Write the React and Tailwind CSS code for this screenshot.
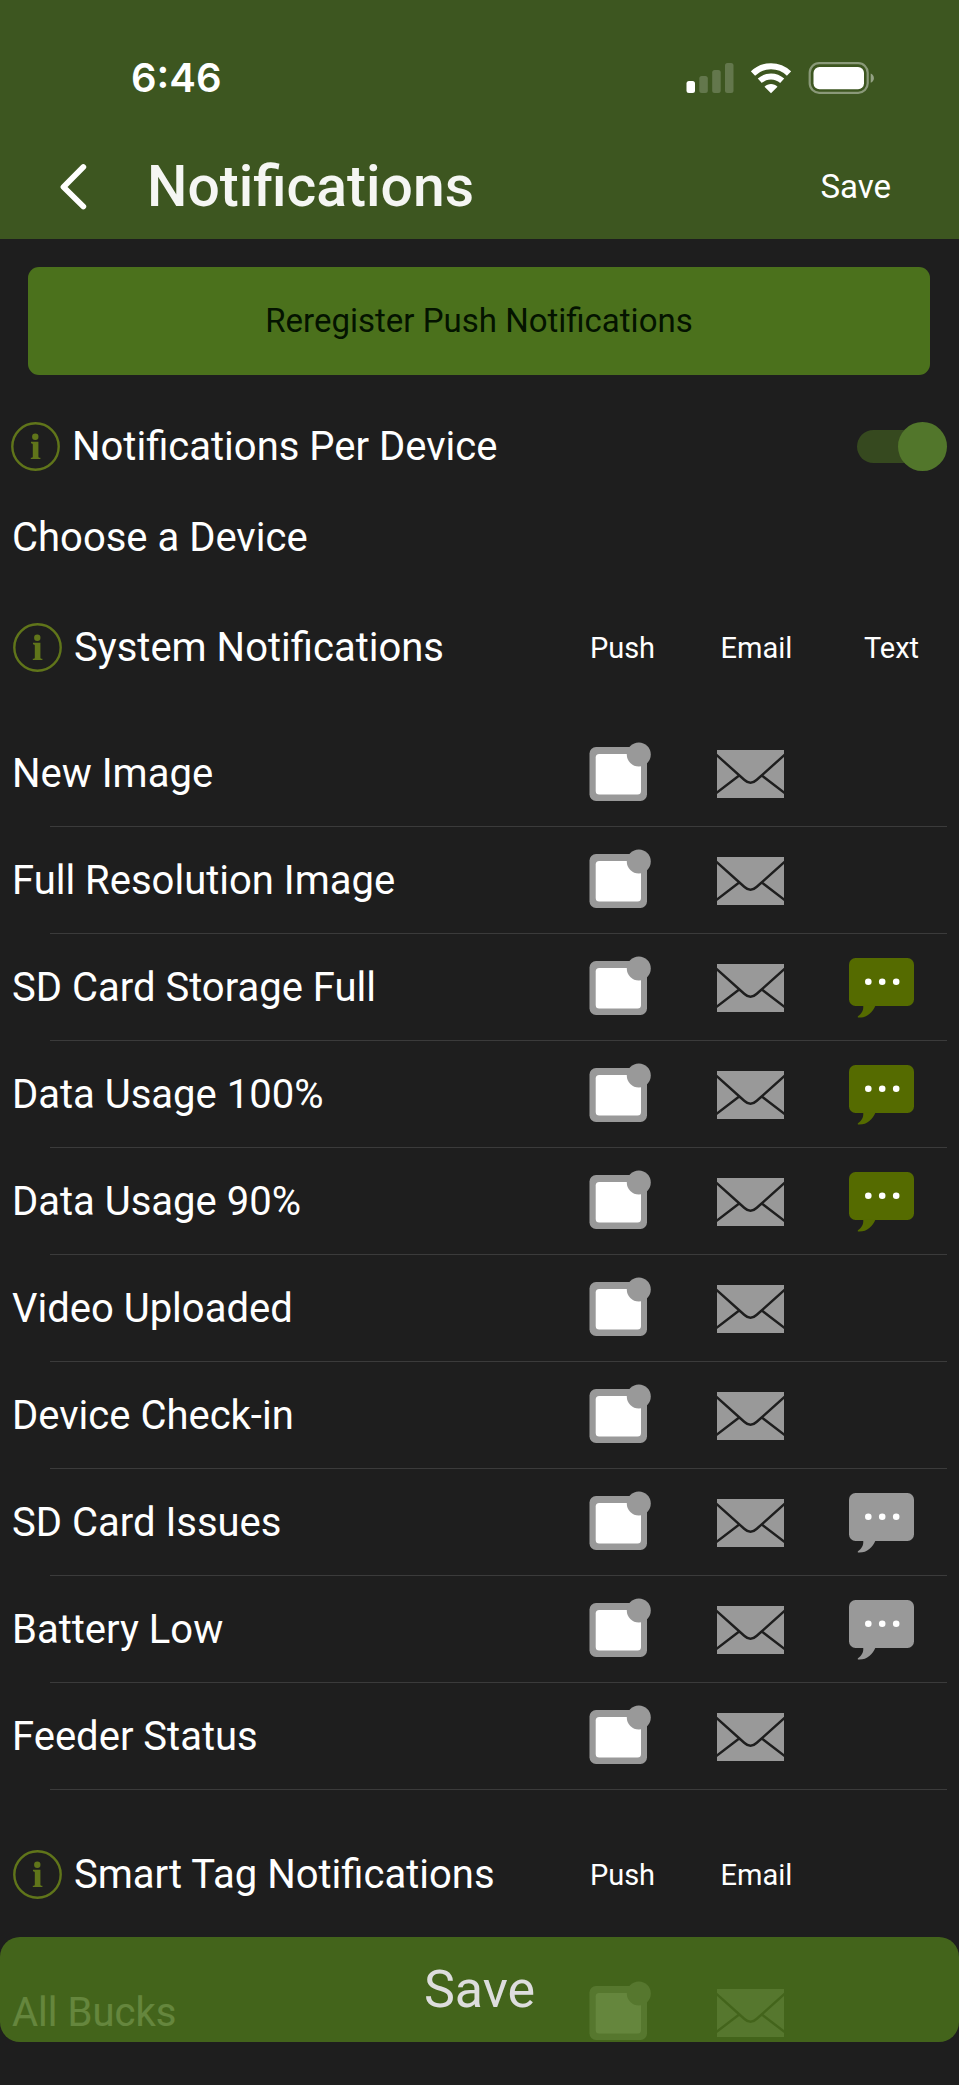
import { useState } from "react";

const systemRows = [
  { name: "New Image" },
  { name: "Full Resolution Image" },
  { name: "SD Card Storage Full", text: true },
  { name: "Data Usage 100%", text: true },
  { name: "Data Usage 90%", text: true },
  { name: "Video Uploaded" },
  { name: "Device Check-in" },
  { name: "SD Card Issues", text: false },
  { name: "Battery Low", text: false },
  { name: "Feeder Status" },
];

const smartTagRows = [{ name: "All Bucks" }];

function InfoIcon() {
  return (
    <svg width="49" height="49" viewBox="0 0 49 49" className="shrink-0 text-[#60751a]" aria-hidden="true">
      <circle cx="24.5" cy="24.5" r="23.2" fill="none" stroke="currentColor" strokeWidth="2.4" />
      <circle cx="24.3" cy="14.7" r="3.2" fill="currentColor" />
      <path d="M20 19.8h7.4v14.6c0 .9.4 1.2 2 1.4V37h-9.6v-1.2c1.6-.2 2-.5 2-1.4V22.6c0-.9-.4-1.3-1.8-1.4z" fill="currentColor" />
    </svg>
  );
}

function PushIcon() {
  return (
    <svg width="62" height="63" viewBox="0 0 62 63" className="text-[#999999]" aria-hidden="true">
      <rect x="0.5" y="5" width="57.5" height="54" rx="6.5" fill="currentColor" />
      <rect x="6.7" y="12" width="45.3" height="40.5" rx="3.5" fill="#fff" />
      <circle cx="49.8" cy="12.5" r="12" fill="currentColor" />
    </svg>
  );
}

function MailIcon() {
  return (
    <svg width="67" height="48" viewBox="0 0 67 48" className="text-[#999999]" aria-hidden="true">
      <path d="M0 0h67v48H0z" fill="currentColor" />
      <path
        d="M-1 4.5L27.5 30Q33.5 35.5 39.5 30L68 4.5M22.5 25.3L-1 43.3M44.5 25.3L68 43.3"
        fill="none"
        stroke="#1e1e1e"
        strokeWidth="2.4"
      />
    </svg>
  );
}

function TextIcon({ on }) {
  return (
    <svg width="65" height="60" viewBox="0 0 65 60" className={on ? "text-[#556b00]" : "text-[#999999]"} aria-hidden="true">
      <rect width="65" height="48" rx="6.5" fill="currentColor" />
      <path d="M14.2 47.5C14.8 52.5 12.5 55.5 9 58.3C8.4 59 8.8 59.6 9.6 59.6C18 60 23.5 54.5 26.5 47.5z" fill="currentColor" />
      <circle cx="19.3" cy="23.8" r="3.3" fill="#fff" />
      <circle cx="33.2" cy="23.8" r="3.3" fill="#fff" />
      <circle cx="47.2" cy="23.8" r="3.3" fill="#fff" />
    </svg>
  );
}

// Tick box that shows the channel icon in place of the native box
function ChannelToggle({ label, checked, onChange, children }) {
  return (
    <label className="flex cursor-pointer justify-center">
      <input type="checkbox" aria-label={label} checked={checked} onChange={onChange} className="sr-only" />
      {children}
    </label>
  );
}

function NotificationRow({ row, last }) {
  const [push, setPush] = useState(false);
  const [email, setEmail] = useState(false);
  const [text, setText] = useState(row.text);

  return (
    <tr className="relative h-[107px]">
      <th scope="row" className="pl-3 text-left text-[40px] leading-[48px] font-normal">
        {row.name}
      </th>
      <td>
        <ChannelToggle label={`${row.name} push`} checked={push} onChange={() => setPush(!push)}>
          <PushIcon />
        </ChannelToggle>
      </td>
      <td>
        <ChannelToggle label={`${row.name} email`} checked={email} onChange={() => setEmail(!email)}>
          <MailIcon />
        </ChannelToggle>
      </td>
      <td className="pr-3">
        {row.text !== undefined && (
          <ChannelToggle label={`${row.name} text`} checked={text} onChange={() => setText(!text)}>
            <TextIcon on={text} />
          </ChannelToggle>
        )}
        {!last && <span className="absolute right-3 bottom-0 left-[50px] h-px bg-[#3b3b3b]" />}
      </td>
    </tr>
  );
}

function NotificationTable({ title, rows, headClass, withText, lastLine }) {
  return (
    <table className="w-full table-fixed border-collapse">
      <colgroup>
        <col />
        <col className="w-[131px]" />
        <col className="w-[131px]" />
        <col className="w-[143px]" />
      </colgroup>
      <thead>
        <tr className={headClass}>
          <th scope="col" className="pl-[13px] text-left text-[40px] leading-[48px] font-normal">
            <span className="flex items-center gap-3 whitespace-nowrap">
              <InfoIcon />
              {title}
            </span>
          </th>
          <th scope="col" className="pl-1.5 text-[29px] leading-9 font-normal">Push</th>
          <th scope="col" className="pl-3 text-[29px] leading-9 font-normal">Email</th>
          {withText ? <th scope="col" className="pl-2 text-[29px] leading-9 font-normal">Text</th> : <td />}
        </tr>
      </thead>
      <tbody>
        {rows.map((row, i) => (
          <NotificationRow key={row.name} row={row} last={!lastLine && i === rows.length - 1} />
        ))}
      </tbody>
    </table>
  );
}

function StatusBar() {
  return (
    <div className="flex h-[155px] items-center justify-between pr-[84px] pl-[131px]">
      <span className="font-['Inter'] text-[40px] leading-[48px] font-semibold">6:46</span>
      <div className="flex items-center gap-[17px]">
        <svg width="48" height="32" viewBox="0 0 48 32" fill="#fff" aria-hidden="true">
          <rect x="0.5" y="19" width="8.5" height="12" rx="2.5" />
          <rect x="13.3" y="14" width="8.5" height="17" rx="2.5" opacity="0.2" />
          <rect x="26.2" y="8" width="8.5" height="23" rx="2.5" opacity="0.2" />
          <rect x="39" y="1" width="8.5" height="30" rx="2.5" opacity="0.2" />
        </svg>
        <svg width="40" height="32" viewBox="0 0 40 32" aria-hidden="true">
          <g fill="none" stroke="#fff" strokeWidth="6">
            <path d="M2 11.5C12 1.8 28 1.8 38 11.5" />
            <path d="M8.8 18.8C15.2 12.9 24.8 12.9 31.2 18.8" />
          </g>
          <path d="M20 31.2L13.5 24.7C17 21.2 23 21.2 26.5 24.7z" fill="#fff" />
        </svg>
        <svg width="67" height="32" viewBox="0 0 67 32" aria-hidden="true">
          <rect x="1.7" y="1.2" width="58" height="29.6" rx="9.5" fill="none" stroke="#fff" strokeWidth="2.2" opacity="0.4" />
          <rect x="5.5" y="5" width="50.5" height="22.3" rx="6" fill="#fff" />
          <path d="M62.7 11.5C67 13.3 67 19 62.7 20.8z" fill="#fff" opacity="0.45" />
        </svg>
      </div>
    </div>
  );
}

export default function App() {
  const [perDevice, setPerDevice] = useState(true);

  return (
    <div className="min-h-screen bg-[#1e1e1e] font-['Roboto',sans-serif] text-white">
      <header className="bg-[#3d5620] pb-[21px]">
        <StatusBar />
        <div className="flex h-[63px] items-center pr-[68px] pl-14">
          <button type="button" aria-label="Back" className="mr-[57px]">
            <svg width="34" height="48" viewBox="0 0 34 48" fill="none" stroke="#fff" strokeWidth="5.8" strokeLinecap="round" strokeLinejoin="round" aria-hidden="true">
              <path d="M27.3 4L7.5 24L27.3 43.5" />
            </svg>
          </button>
          <h1 className="grow text-[57px] leading-[63px] font-medium text-[#f5f6f3]">Notifications</h1>
          <button type="button" className="text-[33px] leading-10">Save</button>
        </div>
      </header>

      <main>
        <div className="pt-7 pr-[29px] pl-7">
          <button type="button" className="h-[108px] w-full rounded-[11px] bg-[#4b711c] text-[33px] leading-10 text-[#041300]">
            Reregister Push Notifications
          </button>
        </div>

        <div className="mt-[18px] flex h-[107px] items-center gap-3 pr-3 pl-[11px]">
          <InfoIcon />
          <label htmlFor="per-device" className="grow text-[40px] leading-[48px]">
            Notifications Per Device
          </label>
          <span className="relative flex h-[49px] w-[90px] items-center">
            <input
              id="per-device"
              type="checkbox"
              role="switch"
              checked={perDevice}
              onChange={() => setPerDevice(!perDevice)}
              className="peer h-[33px] w-[76px] appearance-none rounded-full bg-[#36491f]"
            />
            <span className="pointer-events-none absolute left-0 size-[49px] rounded-full bg-[#999999] peer-checked:right-0 peer-checked:left-auto peer-checked:bg-[#52762b]" />
          </span>
        </div>

        <button type="button" className="flex h-[75px] w-full items-center px-3 text-left text-[40px] leading-[48px]">
          Choose a Device
        </button>

        <NotificationTable title="System Notifications" rows={systemRows} headClass="h-[145px]" withText lastLine />
        <NotificationTable title="Smart Tag Notifications" rows={smartTagRows} headClass="h-[169px]" />
      </main>

      <button
        type="button"
        className="fixed inset-x-0 bottom-[43px] h-[105px] rounded-[20px] bg-[#4b711c] text-[52px] leading-[64px] opacity-85"
      >
        Save
      </button>
    </div>
  );
}
